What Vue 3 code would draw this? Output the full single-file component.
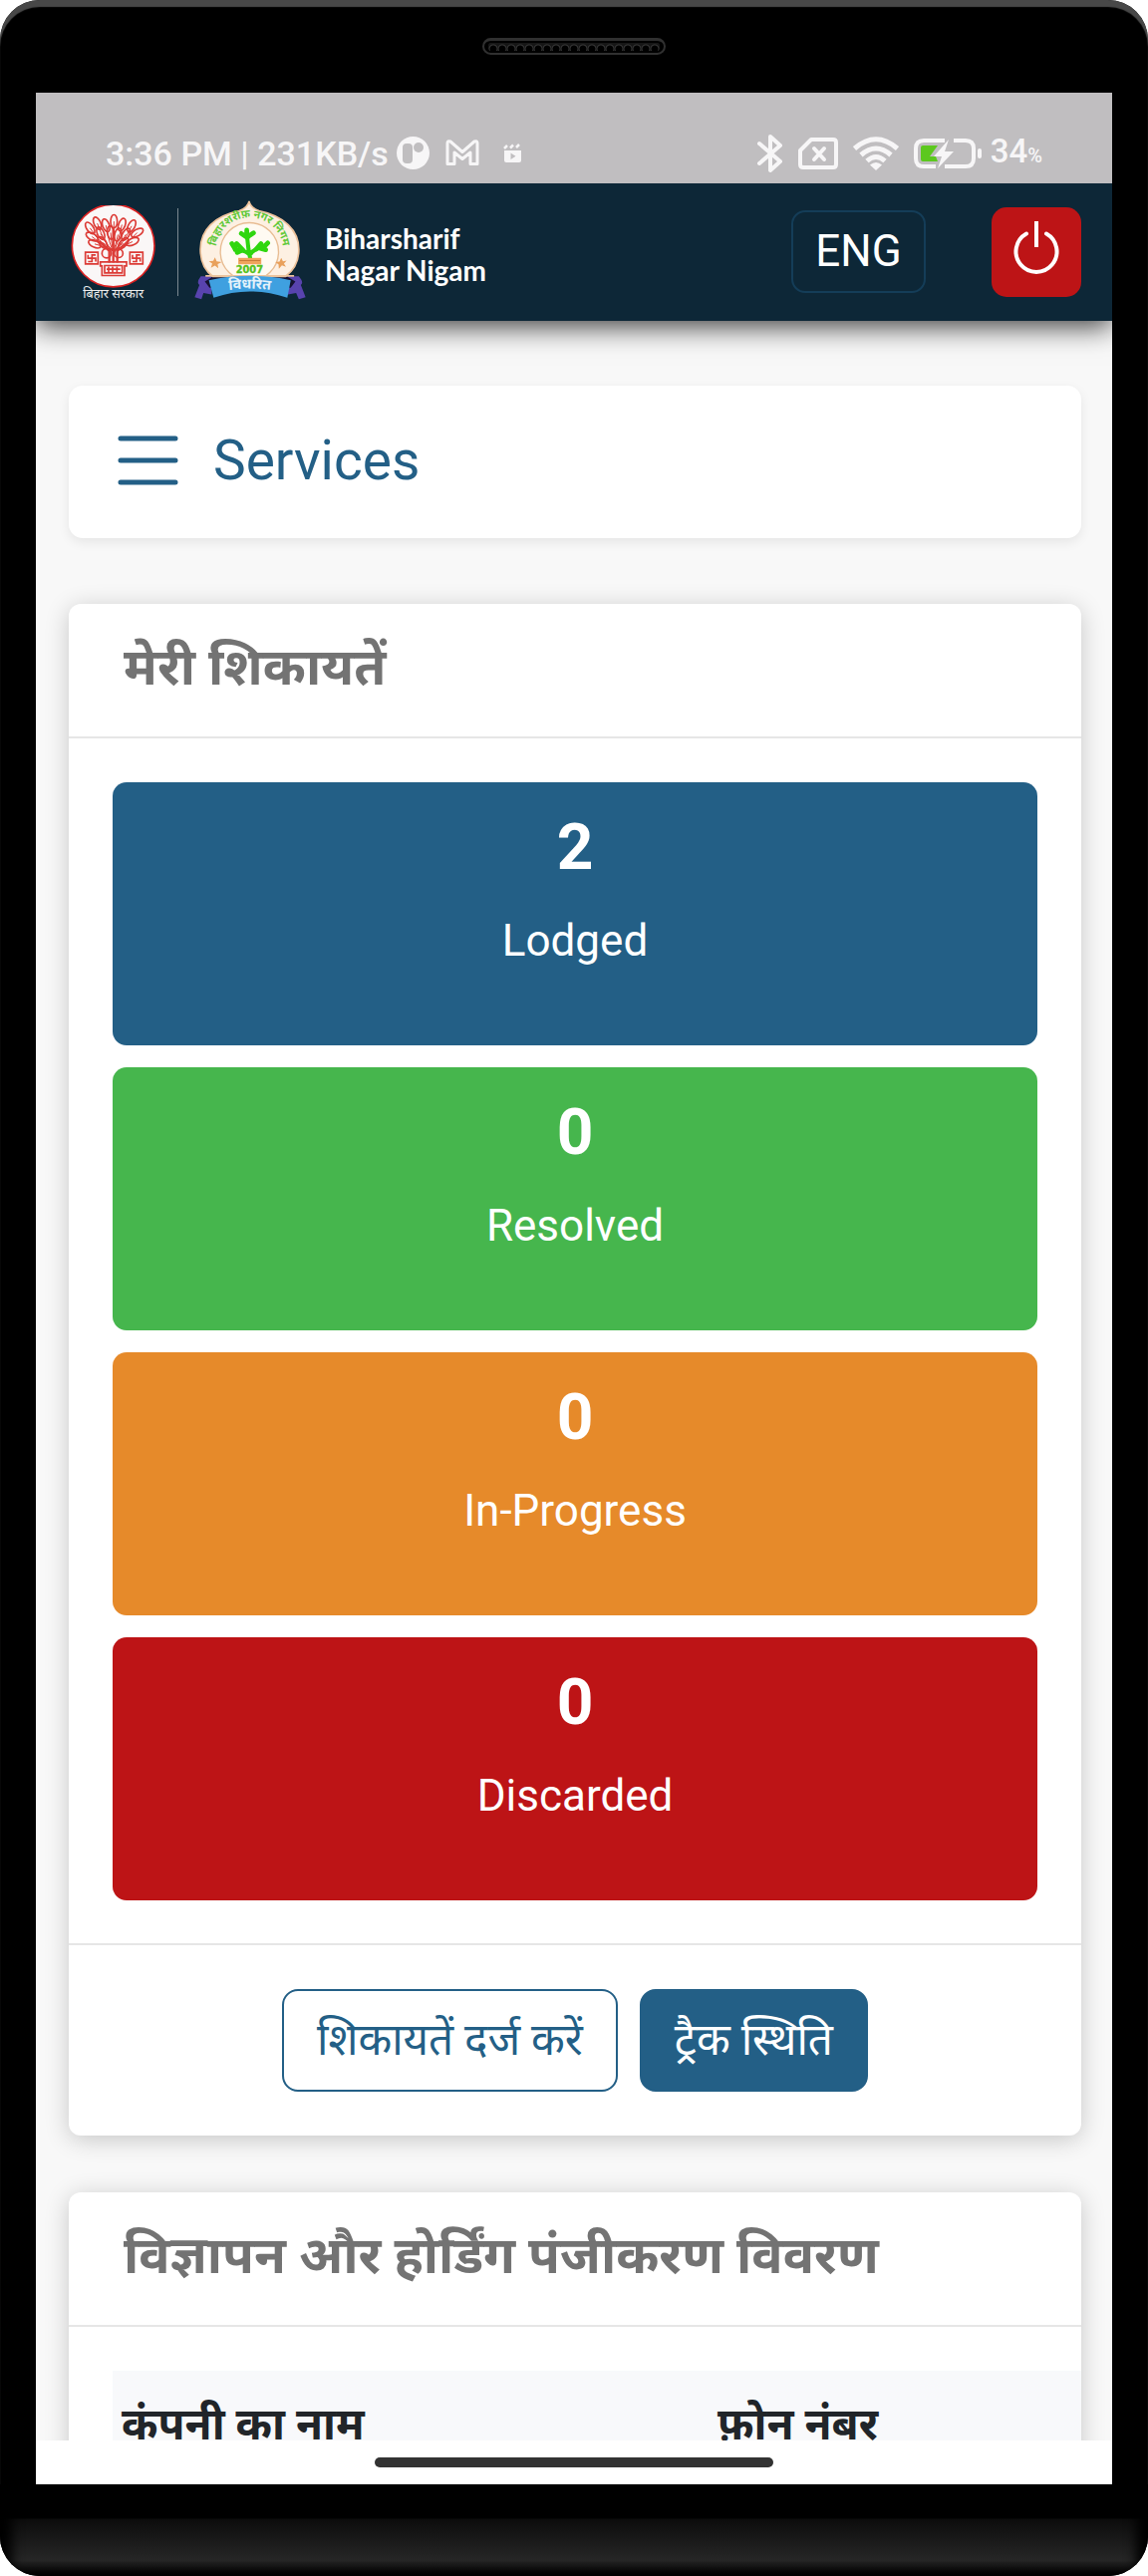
<template>
  <div class="phone">
    <div class="top-edge">
      <div class="speaker"></div>
    </div>

    <div class="screen">
      <!-- status bar -->
      <div class="status">
        <span class="clock">3:36 PM | 231KB/s</span>
        <svg class="dot" viewBox="0 0 66 66" width="33" height="33">
          <circle cx="33" cy="33" r="33" fill="#f7f6f7" />
          <rect x="12" y="14" width="20" height="40" rx="8" fill="#c0bec0" />
          <circle cx="44" cy="22" r="10" fill="#c0bec0" />
        </svg>
        <svg class="mail" viewBox="0 0 34 27" width="34" height="27">
          <path d="M2 3.5Q2 1 5 2L17 12.5L29 2Q32 1 32 3.5V24.5H25V13L17 19.5L9 13V24.5H2Z" fill="none" stroke="#f7f6f7" stroke-width="3" stroke-linejoin="round" />
        </svg>
        <svg class="clip" viewBox="0 0 19 20" width="19" height="20">
          <path d="M1 7H18V17Q18 19 16 19H3Q1 19 1 17Z" fill="#f7f6f7" />
          <path d="M1 5L4 2M7 4.5L10 1.5M13 4L16 1" stroke="#f7f6f7" stroke-width="2.5" />
          <path d="M7.5 9.5V16L12.5 12.7Z" fill="#c0bec0" />
        </svg>

        <div class="status-right">
          <svg viewBox="0 0 26 40" width="26" height="40">
            <path d="M2 10L23 28L13 37V3L23 12L2 30" fill="none" stroke="#f7f6f7" stroke-width="4" stroke-linejoin="round" stroke-linecap="round" />
          </svg>
          <svg viewBox="0 0 40 32" width="40" height="32">
            <path d="M13 2H35Q38 2 38 5V27Q38 30 35 30H5Q2 30 2 27V13Z" fill="none" stroke="#f7f6f7" stroke-width="4" stroke-linejoin="round" />
            <path d="M16 11L26 22M26 11L16 22" stroke="#f7f6f7" stroke-width="4" stroke-linecap="round" />
          </svg>
          <svg viewBox="0 0 46 34" width="46" height="34">
            <g fill="none" stroke="#f7f6f7" stroke-width="5">
              <path d="M1.5 12Q23 -6.5 44.5 12" />
              <path d="M8 18.5Q23 5.5 38 18.5" />
              <path d="M14 24.5Q23 16.5 32 24.5" />
            </g>
            <path d="M17 28.5Q23 23.5 29 28.5L23 34Z" fill="#f7f6f7" />
          </svg>
          <svg viewBox="0 0 68 32" width="68" height="32">
            <path d="M31 3H10Q2 3 2 11V21Q2 29 10 29H22M31 29H52Q60 29 60 21V11Q60 3 52 3H40" fill="none" stroke="#f7f6f7" stroke-width="4" />
            <path d="M7 10Q7 8 9 8H24L16 19H22L24 24H9Q7 24 7 22Z" fill="#5cc81e" />
            <path d="M35 2L20 19H28L24 31L40 14H31Z" fill="#f7f6f7" />
            <rect x="64" y="11" width="4" height="10" rx="2" fill="#f7f6f7" />
          </svg>
          <span class="charge">34<small>%</small></span>
        </div>
      </div>

      <header class="navbar">
        <svg class="seal" viewBox="64 78 258 290" width="86" height="97">
          <circle cx="192" cy="199" r="124" fill="#faf7f7" stroke="#d22" stroke-width="5" />
          <g fill="none" stroke="#dc3b36" stroke-width="5">
            <ellipse v-for="(l, i) in feuilles" :key="i" :cx="l[0]" :cy="l[1]" rx="10" ry="20" :transform="`rotate(${l[2]} ${l[0]} ${l[1]})`" />
            <path v-for="(l, i) in feuilles" :key="'b' + i" :d="`M${l[0]} ${l[1]}Q${(l[0] + 192) / 2} 200 192 215`" stroke-width="3" />
            <path d="M180 250V215L150 185M204 250V215L238 185M192 250V150" stroke-width="7" />
            <circle cx="172" cy="222" r="14" />
            <circle cx="208" cy="222" r="13" />
            <path d="M153 248H232V260H226V289H158V260H153ZM166 259H219V281H166Z" />
            <path d="M172 270H213M178 262V279M190 262V279M203 262V279" />
            <path d="M108 219H146V254H108ZM116 227V237H139V247M139 227H128V247H116" />
            <path d="M242 219H281V254H242ZM250 227V237H273V247M273 227H262V247H250" />
          </g>
          <text x="192" y="356" class="seal-text">बिहार सरकार</text>
        </svg>
        <span class="sep"></span>
        <svg class="emblem" viewBox="432 62 336 294" width="114" height="100">
          <path d="M436 348L450 312Q440 305 454 286H486V340L462 336L456 354ZM764 348L750 312Q760 305 744 286H712V340L736 336L744 354Z" fill="#5843ae" />
          <path d="M466 302L492 286H708L734 302L720 320H480Z" fill="#151332" />
          <path d="M597 64Q600 82 626 93C700 108 744 150 744 207C744 247 725 272 704 287H490C469 272 453 247 453 207C453 150 494 108 568 93Q594 82 597 64Z" fill="#fdf0e2" stroke="#eec39c" stroke-width="5" />
          <circle cx="598" cy="214" r="86" fill="#fffaf2" stroke="#e8bd94" stroke-width="4" />
          <g fill="none" stroke="#2fd60f" stroke-linecap="round" stroke-linejoin="round">
            <path d="M600 232L595 205L590 160M598 222Q585 208 555 208M602 220Q612 204 640 200" stroke-width="12" />
            <path d="M590 158V150M592 172L574 160M592 170L610 158M578 208L560 190M574 210L562 216M618 206L632 190M630 204L646 208M640 200L652 188M556 206L546 190" stroke-width="14" />
          </g>
          <rect x="565" y="232" width="68" height="19" fill="#f0a45d" />
          <path d="M568 240H630" stroke="#c97b39" stroke-width="3" />
          <path d="M496 230L501 242L516 244L504 250L506 263L496 255L484 261L488 249L478 242L491 241ZM692 232L697 242L708 240L700 249L706 258L694 254L685 264L684 251L674 244L687 243Z" fill="#e9a15c" />
          <path d="M468 285H730" stroke="#ecc39c" stroke-width="5" />
          <path id="ringPath" d="M498 212A99 99 0 0 1 698 212" fill="none" />
          <text class="ring-text"><textPath href="#ringPath" startOffset="50%" text-anchor="middle">बिहारशरीफ़ नगर निगम</textPath></text>
          <text x="598" y="276" class="year">2007</text>
          <path d="M478 298Q598 272 720 298L710 350Q598 312 492 350Z" fill="#3fa0e0" />
          <path id="ribbonPath" d="M500 334Q598 312 698 334" fill="none" />
          <text class="ribbon-text"><textPath href="#ribbonPath" startOffset="50%" text-anchor="middle">विधरित</textPath></text>
        </svg>
        <div class="brand">Biharsharif<br />Nagar Nigam</div>
        <button class="lang" @click="changeLangue">{{ langue }}</button>
        <button class="power" aria-label="Logout">
          <svg viewBox="0 0 46 54" width="46" height="54">
            <path d="M13 13.5A20.5 20.5 0 1 0 33 13.5" fill="none" stroke="#fff" stroke-width="4" stroke-linecap="round" />
            <path d="M23 1V27" stroke="#fff" stroke-width="4" />
          </svg>
        </button>
      </header>

      <main class="content">
        <button class="services">
          <svg viewBox="0 0 62 52" width="62" height="52">
            <path d="M3 4H58M3 26H58M3 48H58" stroke="#235f86" stroke-width="5" stroke-linecap="round" />
          </svg>
          Services
        </button>

        <section class="card">
          <h2>मेरी शिकायतें</h2>
          <div class="tiles">
            <div v-for="t in tuiles" :key="t.label" class="tile" :class="t.type">
              <strong>{{ t.nombre }}</strong>
              <span>{{ t.label }}</span>
            </div>
          </div>
          <div class="actions">
            <button class="btn outline">शिकायतें दर्ज करें</button>
            <button class="btn">ट्रैक स्थिति</button>
          </div>
        </section>

        <section class="card second">
          <h2>विज्ञापन और होर्डिंग पंजीकरण विवरण</h2>
          <table>
            <thead>
              <tr>
                <th>कंपनी का नाम</th>
                <th>फ़ोन नंबर</th>
              </tr>
            </thead>
          </table>
        </section>
      </main>

      <div class="gesture"><span></span></div>
    </div>
    <div class="bottom-edge"></div>
  </div>
</template>

<script setup>
import { ref } from 'vue'

const langue = ref('ENG')
const changeLangue = () => {
  langue.value = langue.value == 'ENG' ? 'हिंदी' : 'ENG'
}

// les compteurs de plaintes
const tuiles = [
  { nombre: 2, label: 'Lodged', type: 'lodged' },
  { nombre: 0, label: 'Resolved', type: 'resolved' },
  { nombre: 0, label: 'In-Progress', type: 'progress' },
  { nombre: 0, label: 'Discarded', type: 'discarded' }
]

// feuilles de l'arbre : x, y, rotation
const feuilles = [
  [194, 126, 0],
  [170, 138, -20],
  [218, 136, 20],
  [144, 132, -25],
  [247, 140, 28],
  [122, 146, -35],
  [264, 160, 60],
  [128, 172, -60],
  [154, 162, -25],
  [230, 165, 30],
  [184, 160, -8],
  [206, 166, 12],
  [136, 194, -65],
  [250, 187, 65],
  [160, 190, -35],
  [222, 192, 40]
]
</script>

<style>
body {
  margin: 0;
  background: #fff;
}
</style>

<style scoped>
* {
  box-sizing: border-box;
}
.phone {
  height: 100vh;
  padding: 0 36px;
  display: flex;
  flex-direction: column;
  background: #000;
  border-radius: 40px;
  overflow: hidden;
  font-family: Roboto, "Noto Sans", sans-serif;
  box-shadow: inset 0 7px 1px #484848;
}
.top-edge {
  flex: none;
  height: 93px;
  display: flex;
  justify-content: center;
  align-items: center;
}
.speaker {
  width: 184px;
  height: 17px;
  padding: 2px 4px;
  border: 2px solid #303030;
  border-top-width: 3px;
  border-radius: 9px;
  background: radial-gradient(circle at 5px 6px, #000 3px, #3a3a3a 4px, #161616 5px) 0 0 / 9px 12px repeat-x content-box #161616;
}
.screen {
  flex: 1;
  min-height: 0;
  display: flex;
  flex-direction: column;
  background: #f8f8f8;
}
.status {
  flex: none;
  height: 91px;
  padding: 30px 70px 0;
  display: flex;
  align-items: center;
  background: #c0bec0;
  color: #f7f6f7;
}
.clock {
  font-size: 34px;
  font-weight: 500;
  line-height: 40px;
}
.dot {
  margin-left: 8px;
}
.mail {
  margin-left: 16px;
}
.clip {
  margin-left: 24px;
}
.status-right {
  margin-left: auto;
  display: flex;
  align-items: center;
  gap: 15px;
}
.charge {
  margin-left: -6px;
  font-size: 33px;
  font-weight: 500;
  line-height: 40px;
}
.charge small {
  font-size: 20px;
}
.navbar {
  flex: none;
  height: 138px;
  padding: 0 31px 0 35px;
  display: flex;
  align-items: center;
  background: #0d2737;
  box-shadow: 0 6px 26px rgba(0, 0, 0, 0.75);
  clip-path: inset(0 0 -50px 0);
  z-index: 1;
}
.seal {
  margin-top: 2px;
}
.seal-text {
  font: 38px "Noto Sans", sans-serif;
  fill: #eee;
  text-anchor: middle;
}
.sep {
  width: 1px;
  height: 88px;
  margin: 0 15px 0 21px;
  background: #7b8890;
}
.emblem {
  margin-bottom: 4px;
}
.ring-text {
  font: bold 32px "Noto Sans", sans-serif;
  fill: #62c93a;
}
.year {
  font: bold 29px "DejaVu Sans", sans-serif;
  fill: #54c21d;
  text-anchor: middle;
  stroke: #54c21d;
}
.ribbon-text {
  font: bold 42px "Noto Sans", sans-serif;
  fill: #e4f1fa;
}
.brand {
  margin: 4px 0 0 18px;
  font-family: Lato, sans-serif;
  font-size: 28px;
  font-weight: bold;
  line-height: 32px;
  color: #fff;
}
button {
  font-family: inherit;
  cursor: pointer;
}
.lang {
  width: 135px;
  height: 83px;
  margin: 0 66px 2px auto;
  padding: 0;
  border: 2px solid #143d58;
  border-radius: 14px;
  background: none;
  color: #fff;
  font-size: 44px;
}
.power {
  width: 90px;
  height: 90px;
  padding: 0 0 10px;
  display: flex;
  align-items: center;
  justify-content: center;
  border: 0;
  border-radius: 15px;
  background: #bd1416;
}
.content {
  flex: 1;
  min-height: 0;
  overflow: hidden;
  padding: 65px 31px 0 33px;
}
.services {
  width: 100%;
  height: 153px;
  padding: 0 49px 4px;
  display: flex;
  align-items: center;
  gap: 34px;
  border: 0;
  border-radius: 14px;
  background: #fff;
  color: #235f86;
  font-size: 55px;
  box-shadow: 0 4px 12px rgba(0, 0, 0, 0.08);
}
.card {
  margin-top: 66px;
  border-radius: 12px;
  background: #fff;
  box-shadow: 0 4px 24px rgba(0, 0, 0, 0.2);
}
.second {
  margin-top: 57px;
  height: 400px;
  overflow: hidden;
}
h2 {
  height: 135px;
  margin: 0;
  padding: 28px 55px 0;
  border-bottom: 2px solid #e6e6e6;
  color: #737373;
  font-size: 52px;
  font-weight: bold;
  line-height: 72px;
}
.tiles {
  padding: 44px 44px 43px;
  display: grid;
  gap: 22px;
}
.tile {
  height: 264px;
  padding-top: 28px;
  display: flex;
  flex-direction: column;
  align-items: center;
  border-radius: 14px;
  color: #fff;
}
.tile strong {
  font-size: 64px;
  line-height: 76px;
}
.tile span {
  margin-top: 20px;
  font-size: 44px;
  line-height: 70px;
}
.lodged {
  background: #235f86;
}
.resolved {
  background: #46b64d;
}
.progress {
  background: #e68a2a;
}
.discarded {
  background: #bd1416;
}
.actions {
  padding: 44px;
  display: flex;
  justify-content: center;
  gap: 22px;
  border-top: 2px solid #e6e6e6;
}
.btn {
  height: 103px;
  padding: 0 33px 6px;
  border: 2px solid #235f86;
  border-radius: 16px;
  background: #235f86;
  color: #fff;
  font-size: 44px;
}
.outline {
  background: #fff;
  color: #235f86;
}
table {
  width: 1196px;
  margin: 44px 0 0 44px;
  border-collapse: collapse;
  table-layout: fixed;
  background: #f8f9fb;
}
th {
  height: 110px;
  padding: 0 9px 6px;
  color: #212529;
  font-size: 44px;
  text-align: left;
}
.gesture {
  flex: none;
  height: 44px;
  display: flex;
  justify-content: center;
  align-items: center;
  background: #fff;
}
.gesture span {
  width: 400px;
  height: 10px;
  border-radius: 5px;
  background: #333;
}
.bottom-edge {
  flex: none;
  height: 92px;
  margin: 0 -36px;
  background: linear-gradient(#000 34px, #0c0c0c 35px, #262626 76px, #000);
  box-shadow: inset 12px 0 12px #000, inset -12px 0 12px #000;
}
</style>
